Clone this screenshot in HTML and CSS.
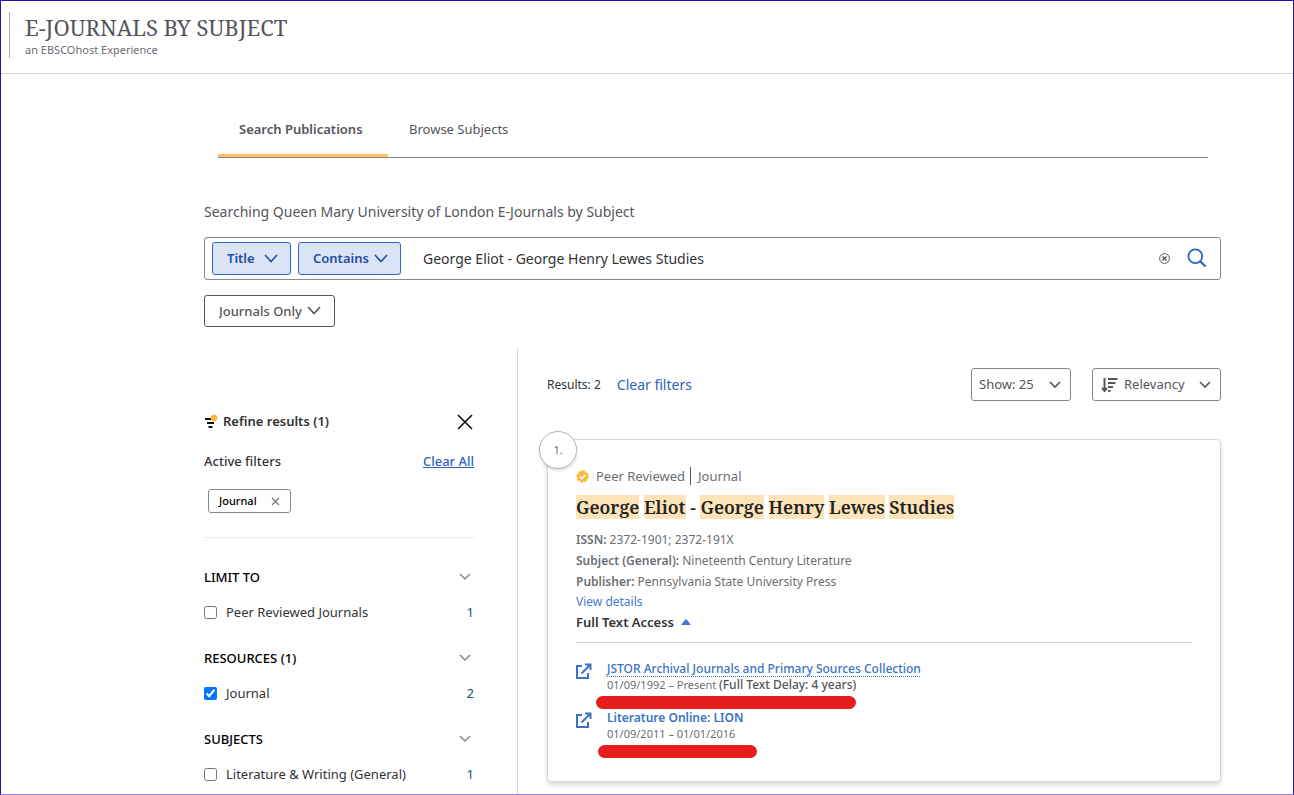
FILE: index.html
```html
<!DOCTYPE html>
<html lang="en">
<head>
    <meta charset="UTF-8">
    <meta name="viewport" content="width=device-width, initial-scale=1.0">
    <title>E-Journals by Subject</title>
    <link rel="stylesheet" href="styles.css">
</head>
<body>
    <header>
        <div class="brand">
            <h1>E-JOURNALS BY SUBJECT</h1>
            <p>an EBSCOhost Experience</p>
        </div>
    </header>

    <main>
        <nav class="tabs">
            <a href="#search" class="active">Search Publications</a>
            <a href="#browse">Browse Subjects</a>
        </nav>

        <!-- Search -->
        <form id="search">
            <label class="search-label" for="query">Searching Queen Mary University of London E-Journals by Subject</label>
            <div class="search-box">
                <div class="select blue title-select">
                    <select aria-label="Search field"><option>Title</option></select>
                    <svg width="14" height="9" viewBox="0 0 14 9"><path d="M1 1l6 6.500 6-6.500"/></svg>
                </div>
                <div class="select blue contains-select">
                    <select aria-label="Match type"><option>Contains</option></select>
                    <svg width="14" height="9" viewBox="0 0 14 9"><path d="M1 1l6 6.500 6-6.500"/></svg>
                </div>
                <input type="text" id="query" value="George Eliot - George Henry Lewes Studies">
                <button type="button" class="icon-btn" aria-label="Clear search">
                    <svg width="11" height="11" viewBox="0 0 11 11" fill="none" stroke="#54565b" stroke-width="1"><circle cx="5.500" cy="5.500" r="4.900"/><path stroke-width="1.400" d="M3.500 3.500l4 4M7.500 3.500l-4 4"/></svg>
                </button>
                <button type="submit" class="icon-btn" aria-label="Search">
                    <svg width="20" height="22" viewBox="0 0 20 22" fill="none" stroke="#2a62bd" stroke-width="1.800"><circle cx="8.300" cy="8.300" r="6.900"/><path stroke-width="2.200" d="M13.200 13.200l5.300 5.300"/></svg>
                </button>
            </div>
            <div class="select journals-select">
                <select aria-label="Publication type"><option>Journals Only</option></select>
                <svg width="14" height="9" viewBox="0 0 14 9"><path d="M1 1l6 6.500 6-6.500"/></svg>
            </div>
        </form>

        <div class="columns">
            <!-- Filters -->
            <aside>
                <div class="row refine">
                    <h2>
                        <svg width="14" height="15" viewBox="0 0 14 15"><path stroke="#111" stroke-width="2" d="M1 5h10M3 9h7M4.500 13h4"/><circle cx="10" cy="4" r="3.300" fill="#ffb53c"/></svg>
                        Refine results (1)
                    </h2>
                    <button type="button" class="icon-btn" aria-label="Close filters">
                        <svg width="17" height="18" viewBox="0 0 17 18" fill="none" stroke="#111" stroke-width="1.600"><path d="M1 3l14 14M15 3L1 17"/></svg>
                    </button>
                </div>
                <div class="row active-filters">
                    <h2>Active filters</h2>
                    <a href="#clear">Clear All</a>
                </div>
                <button type="button" class="chip">
                    Journal
                    <svg width="9" height="9" viewBox="0 0 9 9" fill="none" stroke="#77797e" stroke-width="1.200"><path d="M1 1l7 7M8 1L1 8"/></svg>
                </button>
                <hr>

                <section class="facet">
                    <div class="row">
                        <h3>LIMIT TO</h3>
                        <svg width="12" height="8" viewBox="0 0 12 8"><path d="M1 1l5 5 5-5"/></svg>
                    </div>
                    <label class="option"><input type="checkbox"> Peer Reviewed Journals <span>1</span></label>
                </section>
                <section class="facet">
                    <div class="row">
                        <h3>RESOURCES (1)</h3>
                        <svg width="12" height="8" viewBox="0 0 12 8"><path d="M1 1l5 5 5-5"/></svg>
                    </div>
                    <label class="option"><input type="checkbox" checked> Journal <span>2</span></label>
                </section>
                <section class="facet">
                    <div class="row">
                        <h3>SUBJECTS</h3>
                        <svg width="12" height="8" viewBox="0 0 12 8"><path d="M1 1l5 5 5-5"/></svg>
                    </div>
                    <label class="option"><input type="checkbox"> Literature &amp; Writing (General) <span>1</span></label>
                </section>
            </aside>

            <!-- Results -->
            <section class="results">
                <div class="toolbar">
                    <span class="count">Results: 2</span>
                    <a href="#clear">Clear filters</a>
                    <div class="select show-select">
                        <select aria-label="Results per page"><option>Show: 25</option></select>
                        <svg width="12" height="8" viewBox="0 0 12 8"><path d="M1 1l5 5 5-5"/></svg>
                    </div>
                    <div class="select sort-select">
                        <svg class="sort-icon" width="17" height="16" viewBox="0 0 17 16"><path d="M3.500 1v12"/><path d="M1 11l2.500 3L6 11"/><path d="M7 2h9.500M7 6h7.500M7 10h5M7 14h2.500"/></svg>
                        <select aria-label="Sort by"><option>Relevancy</option></select>
                        <svg width="12" height="8" viewBox="0 0 12 8"><path d="M1 1l5 5 5-5"/></svg>
                    </div>
                </div>

                <article class="card">
                    <span class="number">1.</span>
                    <div class="meta">
                        <svg width="13" height="13" viewBox="0 0 13 13"><circle cx="6.500" cy="6.500" r="5" fill="#fcb941"/><circle cx="6.500" cy="6.500" r="5" fill="none" stroke="#fcb941" stroke-width="2.400" stroke-linecap="round" stroke-dasharray="1 2.927"/><path d="M3.800 6.700l2 1.900 3.500-3.600" fill="none" stroke="#fff" stroke-width="1.500"/></svg>
                        <span class="peer">Peer Reviewed</span>
                        <span>Journal</span>
                    </div>
                    <h2><mark>George</mark> <mark>Eliot</mark> - <mark>George</mark> <mark>Henry</mark> <mark>Lewes</mark> <mark>Studies</mark></h2>
                    <p><b>ISSN:</b> 2372-1901; 2372-191X</p>
                    <p><b>Subject (General):</b> Nineteenth Century Literature</p>
                    <p><b>Publisher:</b> Pennsylvania State University Press</p>
                    <a href="#details" class="details">View details</a>
                    <button type="button" class="access">
                        Full Text Access
                        <svg width="10" height="6" viewBox="0 0 10 6"><path d="M0 6L4 .800Q5-.200 6 .800L10 6z" fill="#427bd2"/></svg>
                    </button>
                    <ul>
                        <li>
                            <svg width="16" height="16" viewBox="0 0 16 16" fill="none" stroke="#3c72c4" stroke-width="2"><path d="M6 3H1v12h11v-5M9 1.500h5.500V7M14 2L5.500 10.500"/></svg>
                            <div>
                                <a href="#jstor" class="dotted">JSTOR Archival Journals and Primary Sources Collection</a>
                                <p>01/09/1992 – Present <b>(Full Text Delay: 4 years)</b></p>
                                <div class="redline long"></div>
                            </div>
                        </li>
                        <li>
                            <svg width="16" height="16" viewBox="0 0 16 16" fill="none" stroke="#3c72c4" stroke-width="2"><path d="M6 3H1v12h11v-5M9 1.500h5.500V7M14 2L5.500 10.500"/></svg>
                            <div>
                                <a href="#lion">Literature Online: LION</a>
                                <p>01/09/2011 – 01/01/2016</p>
                                <div class="redline short"></div>
                            </div>
                        </li>
                    </ul>
                </article>
            </section>
        </div>
    </main>
</body>
</html>
```
FILE: styles.css
```css
* {
    box-sizing: border-box;
}

body {
    font-family: "Noto Sans", sans-serif;
    font-size: 13px;
    line-height: 24px;
    margin: 0;
    min-height: 100vh;
    display: flex;
    flex-direction: column;
    background: #fff;
    color: #333;
    border: 1px solid #2f0bb0;
    border-bottom-color: #9a84d8;
}

h1, h2, h3, p, ul {
    margin: 0;
    padding: 0;
}

h2, h3 {
    font-size: 13px;
    font-weight: 600;
}

b {
    font-weight: 600;
}

a {
    color: #2f62b8;
    text-decoration: none;
}

button, select, input {
    font: inherit;
    color: inherit;
}

svg {
    display: block;
    flex: none;
}

header {
    padding: 11px 8px 15px;
    border-bottom: 1px solid #d6d6d8;
}

.brand {
    height: 46px;
    padding-left: 15px;
    border-left: 1px solid #a9abae;
}

.brand h1 {
    font-family: "Noto Serif", "Droid Serif", "DejaVu Serif Condensed", serif;
    font-size: 22px;
    font-weight: 400;
    line-height: 30px;
    color: #54565b;
}

.brand p {
    font-size: 11px;
    line-height: 16px;
    color: #6c6e73;
}

main {
    flex: 1;
    display: flex;
    flex-direction: column;
    padding: 30px 72px 0 203px;
}

/* tabs */
.tabs {
    display: flex;
    margin: 0 13px 42px 14px;
    border-bottom: 1px solid #88898d;
}

.tabs a {
    padding: 13px 21px;
    border-bottom: 3px solid transparent;
    color: #54565b;
}

.tabs .active {
    width: 170px;
    padding-right: 0;
    font-weight: 600;
    border-bottom-color: #fdc05a;
}

/* search */
.search-label {
    display: block;
    margin-bottom: 13px;
    font-size: 14px;
    color: #54565b;
}

.search-box {
    display: flex;
    align-items: center;
    gap: 7px;
    height: 43px;
    padding: 0 13px 0 7px;
    margin-bottom: 15px;
    border: 1px solid #88898d;
    border-radius: 3px;
}

.search-box input {
    flex: 1;
    min-width: 0;
    padding: 0 0 0 15px;
    border: none;
    outline: none;
    background: none;
    font-size: 14px;
}

.icon-btn {
    padding: 0;
    border: none;
    background: none;
    cursor: pointer;
}

.search-box .icon-btn {
    margin-left: 10px;
}

.select {
    position: relative;
    height: 33px;
    color: #54565b;
}

.select select {
    appearance: none;
    width: 100%;
    height: 100%;
    padding: 0 0 1px 7px;
    border: 1px solid #88898d;
    border-radius: 3px;
    background: #fff;
    cursor: pointer;
}

.select svg {
    position: absolute;
    top: 12px;
    right: 13px;
    fill: none;
    stroke: currentColor;
    stroke-width: 1.6;
    pointer-events: none;
}

.select.blue {
    color: #244f9e;
}

.select.blue select {
    padding-left: 14px;
    border-color: #2e69c8;
    background: #dae4f6;
    font-weight: 600;
}

.title-select {
    width: 79px;
}

.contains-select {
    width: 103px;
}

.journals-select {
    width: 131px;
    height: 32px;
}

.journals-select select {
    padding-left: 14px;
    border-color: #54565b;
    font-weight: 500;
}

.journals-select svg {
    top: 11px;
    right: 14px;
}

.columns {
    flex: 1;
    display: grid;
    grid-template-columns: 314px 1fr;
    margin-top: 22px;
}

/* filters */
aside {
    padding: 60px 43px 6px 0;
    border-right: 1px solid #d6d6d8;
}

.row {
    display: flex;
    justify-content: space-between;
    align-items: center;
}

.refine h2 {
    display: flex;
    align-items: center;
    gap: 5px;
}

.active-filters {
    margin: 16px 0;
}

.active-filters h2,
.active-filters a {
    font-weight: 500;
}

.active-filters a {
    text-decoration: underline;
}

.chip {
    display: flex;
    align-items: center;
    gap: 14px;
    height: 24px;
    margin-left: 4px;
    padding: 0 10px;
    border: 1px solid #88898d;
    border-radius: 3px;
    background: #fff;
    color: #000;
    font-size: 11px;
    font-weight: 500;
}

aside hr {
    margin: 24px 0 27px;
    border: none;
    border-top: 1px solid #e9e9eb;
}

.facet {
    margin-bottom: 22px;
}

.facet:last-child {
    margin-bottom: 0;
}

.facet h3 {
    font-weight: 500;
    color: #000;
}

.facet svg {
    margin-right: 3px;
    fill: none;
    stroke: #88898d;
    stroke-width: 1.5;
}

.option {
    display: flex;
    align-items: center;
    gap: 9px;
    margin-top: 11px;
}

.option input {
    width: 13px;
    height: 13px;
    margin: 0;
}

.option span {
    margin-left: auto;
    color: #244a7c;
}

/* results */
.results {
    padding: 19px 0 8px 29px;
}

.toolbar {
    display: flex;
    align-items: center;
    margin-bottom: 38px;
}

.toolbar .count {
    font-size: 12px;
    margin-right: 16px;
}

.toolbar a {
    font-size: 14px;
}

.show-select {
    width: 100px;
    margin-left: auto;
    margin-right: 21px;
}

.sort-select {
    width: 129px;
}

.sort-select select {
    padding-left: 31px;
}

.show-select svg,
.sort-select svg {
    top: 13px;
    right: 10px;
}

.select .sort-icon {
    top: 9px;
    left: 9px;
    stroke-width: 2;
}

.card {
    position: relative;
    padding: 24px 28px 22px;
    border: 1px solid #d6d8d8;
    border-radius: 4px;
    box-shadow: 0 3px 4px rgba(0, 0, 0, 0.15);
    color: #6c6e73;
}

.number {
    position: absolute;
    top: -9px;
    left: -9px;
    width: 38px;
    height: 38px;
    border: 1px solid #b4b5b7;
    border-radius: 50%;
    background: #fff;
    box-shadow: 0 2px 3px rgba(0, 0, 0, 0.12);
    font-size: 11px;
    line-height: 36px;
    text-align: center;
}

.meta {
    display: flex;
    align-items: center;
    gap: 7px;
    margin-bottom: 7px;
}

.meta .peer {
    padding-right: 5px;
    border-right: 1px solid #54565b;
    line-height: 18px;
}

.card h2 {
    margin-bottom: 10px;
    font-family: "Noto Serif", "Droid Serif", "DejaVu Serif Condensed", serif;
    font-size: 18px;
    line-height: 24px;
    color: #222;
}

.card mark {
    display: inline-block;
    background: #fde3b8;
    color: inherit;
}

.card p {
    font-size: 12px;
    line-height: 21px;
}

.details {
    display: block;
    font-size: 12px;
    line-height: 20px;
    color: #427bd2;
}

.access {
    display: flex;
    align-items: center;
    gap: 7px;
    padding: 0;
    border: none;
    background: none;
    color: #333;
    font-weight: 600;
    line-height: 20px;
}

.card ul {
    margin-top: 10px;
    padding-top: 18px;
    border-top: 1px solid #d6d8d8;
    list-style: none;
}

.card li {
    display: flex;
    gap: 15px;
    margin-bottom: 1px;
}

.card li svg {
    margin-top: 2px;
}

.card li a {
    display: block;
    font-size: 12px;
    font-weight: 600;
    line-height: 16px;
    color: #3c72c4;
}

.card li .dotted {
    font-weight: 500;
    text-decoration: underline dotted;
    text-underline-offset: 3px;
}

.card li p {
    font-size: 11px;
    line-height: 16px;
}

.card li b {
    font-size: 12px;
    font-weight: 500;
    color: #54565b;
}

.redline {
    height: 13px;
    margin-top: 3px;
    border-radius: 7px;
    background: #e71d1d;
}

.redline.long {
    width: 260px;
    margin-left: -11px;
}

.redline.short {
    width: 159px;
    margin-left: -9px;
}
```
